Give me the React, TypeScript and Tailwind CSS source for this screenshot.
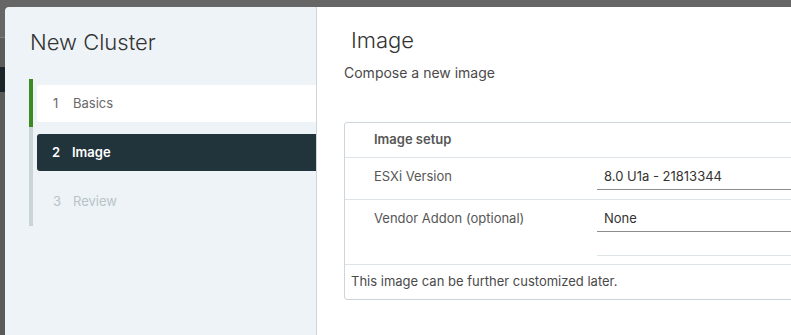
export default function App() {
  const steps = [
    { n: 1, label: 'Basics', state: 'done' },
    { n: 2, label: 'Image', state: 'active' },
    { n: 3, label: 'Review', state: 'todo' },
  ];

  return (
    <div className="flex w-[791px] h-[335px] overflow-hidden bg-[#5e5e5e] font-['Inter',sans-serif]">
      {/* page behind the overlay */}
      <div className="flex w-[5px] shrink-0 flex-col">
        <div className="h-[37px] bg-[#666666]" />
        <div className="h-px bg-[#7b7b7b]" />
        <div className="h-[29px] bg-[#5c5c5c]" />
        <div className="h-[25px] bg-[#1b2428]" />
        <div className="flex-1 bg-[#5a5a5a]" />
      </div>

      <div className="flex flex-1 flex-col">
        <div className="h-[7px] bg-[#666666]" />
        <div className="flex flex-1 overflow-hidden rounded-tl-[4px]">
          {/* wizard nav */}
          <div className="w-[312px] shrink-0 border-r border-[#cdd5da] bg-[#eef3f7]">
            <h1 className="pl-[25px] pt-[18px] text-[22px] leading-[34px] font-light text-[#333333]">New Cluster</h1>
            <div className="mt-[20px] ml-[24px] flex">
              <div className="flex w-[4px] flex-col">
                <div className="h-[48px] bg-[#3c8a24]" />
                <div className="flex-1 bg-[#cbd4d9]" />
              </div>
              <div className="flex flex-1 flex-col gap-[12px] pt-[6px] pb-[6px] pl-[4px]">
                {steps.map((s) => (
                  <div
                    key={s.n}
                    className={
                      s.state === 'active'
                        ? 'flex h-[37px] items-center rounded-l-[3px] bg-[#21333b] pl-[15px] pt-px text-[13px] font-semibold text-white'
                        : s.state === 'done'
                          ? 'flex h-[37px] items-center rounded-l-[3px] bg-white pl-[16px] pt-px text-[13px] text-[#6a6a6a]'
                          : 'flex h-[37px] items-center pl-[16px] pt-px text-[13px] text-[#b9c3c8]'
                    }
                  >
                    <span className="w-[20px]">{s.n}</span>
                    <span>{s.label}</span>
                  </div>
                ))}
              </div>
            </div>
          </div>

          {/* content */}
          <div className="flex-1 bg-white">
            <h2 className="pl-[34px] pt-[16px] text-[22px] leading-[34px] font-light text-[#333333]">Image</h2>
            <p className="mt-[7px] pl-[27px] text-[14px] leading-[18px] text-[#4a4a4a]">Compose a new image</p>
            <div className="ml-[27px] mt-[40px] w-[500px] rounded-[3px] border border-[#cdd5da] text-[13px]">
              <div className="flex h-[35px] items-center border-b border-[#dde3e7] pl-[29px] font-semibold text-[#565656]">
                Image setup
              </div>
              <div className="flex h-[42px] border-b border-[#dde3e7]">
                <div className="w-[252px] pl-[29px] pt-[9px] text-[#565656]">ESXi Version</div>
                <div className="flex-1">
                  <div className="flex h-[32px] items-end border-b border-[#8c8c8c] pb-[3px] pl-[7px] text-[#333333]">
                    8.0 U1a - 21813344
                  </div>
                </div>
              </div>
              <div className="flex h-[65px] border-b border-[#dde3e7]">
                <div className="w-[252px] pl-[29px] pt-[9px] text-[#565656]">Vendor Addon (optional)</div>
                <div className="flex-1">
                  <div className="flex h-[32px] items-end border-b border-[#8c8c8c] pb-[3px] pl-[7px] text-[#333333]">
                    None
                  </div>
                  <div className="h-[24px] border-b border-[#dde3e7]" />
                </div>
              </div>
              <div className="flex h-[34px] items-center pl-[6px] text-[13px] text-[#4a4a4a]">
                This image can be further customized later.
              </div>
            </div>
          </div>
        </div>
      </div>
    </div>
  );
}
